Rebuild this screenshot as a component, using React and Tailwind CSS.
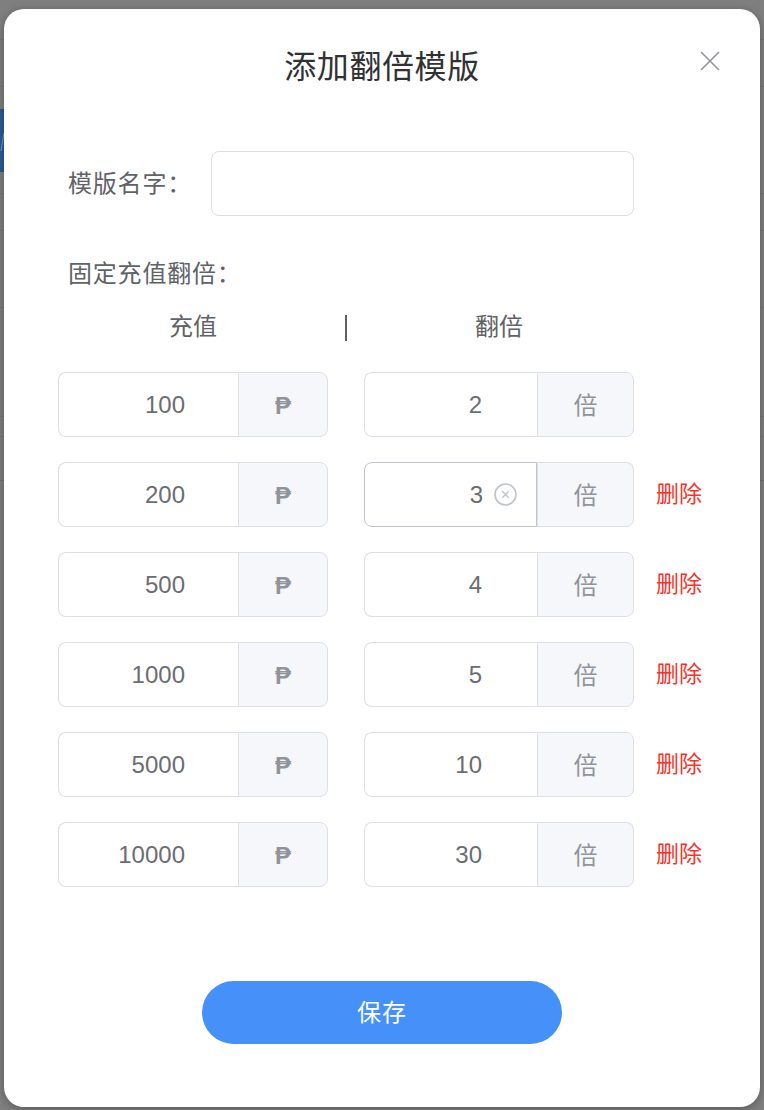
const rows = [
  { amount: "100", times: "2" },
  { amount: "200", times: "3", focused: true },
  { amount: "500", times: "4" },
  { amount: "1000", times: "5" },
  { amount: "5000", times: "10" },
  { amount: "10000", times: "30" },
];

function ClearIcon() {
  return (
    <svg width="23" height="23" viewBox="0 0 23 23" fill="none" stroke="#c0c4cc" className="ml-[11px] shrink-0">
      <circle cx="11.5" cy="11.5" r="10.5" strokeWidth="1.6" />
      <path d="M8.3 8.3l6.4 6.4M14.7 8.3l-6.4 6.4" strokeWidth="1.4" />
    </svg>
  );
}

function InputGroup({ value, unit, inputClass, unitClass, focused }) {
  return (
    <div className="flex h-[65px] w-[270px] text-[24px]">
      <div
        className={`flex items-center justify-end rounded-l-[8px] border bg-white text-[#6a6d72] ${
          focused ? "border-[#c0c4cc] pr-[19px]" : "border-[#dcdfe6] border-r-0"
        } ${inputClass}`}
      >
        <span className="font-['Liberation_Sans',sans-serif]">{value}</span>
        {focused && <ClearIcon />}
      </div>
      <div className={`flex flex-1 items-center justify-center rounded-r-[8px] border border-[#dcdfe6] bg-[#f5f7fa] text-[#909399] ${unitClass}`}>
        {unit}
      </div>
    </div>
  );
}

export default function App() {
  return (
    <div className="relative h-[1110px] w-[764px] overflow-hidden bg-[#7f7f7f] font-['Noto_Sans_CJK_SC',sans-serif]">
      {/* page behind the dialog */}
      <div className="flex h-full flex-col pt-[39px]">
        <div className="h-px bg-[#757575]" />
        <div className="mt-[46px] h-px bg-[#757575]" />
        <div className="mt-[22px] h-[63px] w-[4px] bg-[#2b5a94]">
          <svg width="4" height="63" viewBox="0 0 4 63" stroke="#7f9cc0" fill="none">
            <path d="M1 42l3-18" />
          </svg>
        </div>
        <div className="mt-[21px] h-px bg-[#757575]" />
        <div className="mt-[36px] h-px bg-[#757575]" />
        <div className="mt-[76px] h-px bg-[#757575]" />
        <div className="mt-[108px] h-px bg-[#757575]" />
        <div className="mt-[19px] h-px bg-[#757575]" />
        <div className="mt-[43px] h-px bg-[#6f6f6f]" />
      </div>

      {/* dialog */}
      <div className="absolute left-[4px] top-[9px] flex h-[1098px] w-[756px] flex-col rounded-[20px] bg-white shadow-[0_2px_10px_rgba(0,0,0,0.3)]">
        <div className="relative flex h-[114px] justify-center pt-[32px]">
          <h1 className="text-[32px] leading-[46px] tracking-[0.6px] text-[#303133]">添加翻倍模版</h1>
          <svg width="20" height="20" viewBox="0 0 20 20" stroke="#909399" strokeWidth="1.6" className="absolute left-[696px] top-[42px]">
            <path d="M1 1l18 18M19 1L1 19" />
          </svg>
        </div>

        <div className="mt-[28px] flex items-center pl-[64px]">
          <label className="w-[143px] pb-[4px] text-[24px] tracking-[0.8px] text-[#606266]">模版名字：</label>
          <div className="h-[65px] w-[423px] rounded-[8px] border border-[#dcdfe6]" />
        </div>

        <div className="mt-[38px] pl-[64px] text-[24px] leading-[36px] tracking-[0.8px] text-[#606266]">固定充值翻倍：</div>

        <div className="mt-[20px] flex h-[36px] items-center pl-[54px] text-[24px] text-[#606266]">
          <span className="w-[270px] pb-[6px] text-center">充值</span>
          <span className="ml-[17px] h-[26px] w-[2px] bg-[#606266]" />
          <span className="ml-[17px] w-[270px] pb-[6px] text-center">翻倍</span>
        </div>

        <div className="mt-[26px] flex flex-col gap-[25px] pl-[54px]">
          {rows.map((row, i) => (
            <div key={row.amount} className="flex items-center">
              <InputGroup value={row.amount} unit="₱" inputClass="w-[180px] pr-[53px]" unitClass="pb-[2px] font-semibold" />
              <div className="ml-[36px]">
                <InputGroup
                  value={row.times}
                  unit="倍"
                  inputClass={row.focused ? "w-[173px]" : "w-[173px] pr-[55px]"}
                  unitClass="pb-[2px]"
                  focused={row.focused}
                />
              </div>
              {i > 0 && <span className="ml-[22px] pb-[4px] text-[23px] text-[#f4332a]">删除</span>}
            </div>
          ))}
        </div>

        <button className="mx-auto mt-[94px] h-[63px] w-[360px] rounded-full bg-[#4690f9] pb-[4px] text-[24px] tracking-[1px] text-white">
          保存
        </button>
      </div>
    </div>
  );
}
